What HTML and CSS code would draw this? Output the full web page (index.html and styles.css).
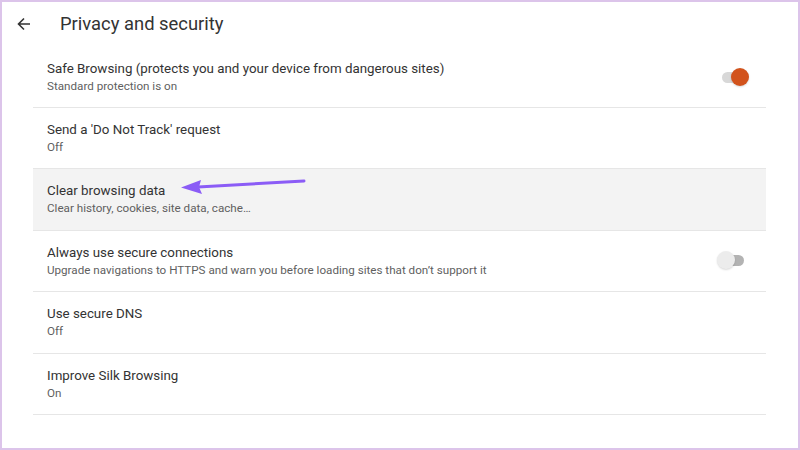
FILE: index.html
```html
<!DOCTYPE html>
<html lang="en">
<head>
    <meta charset="UTF-8">
    <meta name="viewport" content="width=device-width, initial-scale=1.0">
    <title>Privacy and security</title>
    <link rel="stylesheet" href="styles.css">
</head>
<body>

<div class="frame">

    <header class="topbar">
        <span class="back">
            <svg width="14" height="14" viewBox="0 0 14 14">
                <path d="M13 7H1.5M7 1.5L1.5 7L7 12.5" fill="none" stroke="#333" stroke-width="1.6"/>
            </svg>
        </span>
        <h1>Privacy and security</h1>
    </header>

    <section class="list">

        <div class="row">
            <div class="text">
                <p class="title">Safe Browsing (protects you and your device from dangerous sites)</p>
                <p class="sub">Standard protection is on</p>
            </div>
            <span class="toggle on"></span>
        </div>

        <div class="row">
            <div class="text">
                <p class="title">Send a 'Do Not Track' request</p>
                <p class="sub">Off</p>
            </div>
        </div>

        <div class="row hover">
            <div class="text">
                <p class="title">Clear browsing data</p>
                <p class="sub">Clear history, cookies, site data, cache…</p>
            </div>
            <svg class="pointer" width="130" height="16" viewBox="0 0 130 16">
                <path d="M124 3 L18 9" stroke="#8b5cf6" stroke-width="3" stroke-linecap="round"/>
                <path d="M1 9.5 L21 2 L19 9 L22 16 Z" fill="#8b5cf6"/>
            </svg>
        </div>

        <div class="row">
            <div class="text">
                <p class="title">Always use secure connections</p>
                <p class="sub">Upgrade navigations to HTTPS and warn you before loading sites that don’t support it</p>
            </div>
            <span class="toggle"></span>
        </div>

        <div class="row">
            <div class="text">
                <p class="title">Use secure DNS</p>
                <p class="sub">Off</p>
            </div>
        </div>

        <div class="row">
            <div class="text">
                <p class="title">Improve Silk Browsing</p>
                <p class="sub">On</p>
            </div>
        </div>

    </section>

</div>

</body>
</html>
```

FILE: styles.css
```css
html, body {
    margin: 0;
    padding: 0;
}

body {
    background-color: #fff;
    font-family: Roboto, "Noto Sans", sans-serif;
    color: #333;
}

.frame {
    width: 800px;
    height: 450px;
    box-sizing: border-box;
    border: 2px solid #dcc4ea;
    overflow: hidden;
}

.topbar {
    display: flex;
    align-items: center;
    height: 43px;
    padding-bottom: 2px;
}

.back {
    display: flex;
    width: 14px;
    margin-left: 15px;
    margin-right: 29px;
}

h1 {
    margin: 0;
    font-size: 18.4px;
    font-weight: 400;
    color: #333;
}

.list {
    margin-left: 31px;
    width: 733px;
}

.row {
    position: relative;
    display: flex;
    align-items: center;
    justify-content: space-between;
    height: 60px;
    padding: 0 14px;
    border-bottom: 1px solid #e6e6e6;
}

.row:nth-child(n+3) {
    height: 60.5px;
}

.row.hover {
    background-color: #f3f3f3;
}

.text p {
    margin: 0;
}

.title {
    font-size: 13.35px;
    line-height: 18px;
    color: #333;
}

.sub {
    font-size: 11.65px;
    line-height: 16px;
    color: #5f5f5f;
}

/* switches on the right side */
.toggle {
    position: relative;
    width: 22px;
    height: 11px;
    margin-right: 8px;
    border-radius: 6px;
    background-color: #b3b3b3;
}

.toggle::after {
    content: "";
    position: absolute;
    top: -4px;
    left: -5px;
    width: 18px;
    height: 18px;
    border-radius: 50%;
    background-color: #ececec;
    box-shadow: 0 1px 2px rgba(0, 0, 0, 0.15);
}

.toggle.on {
    background-color: #d8d8d8;
}

.toggle.on::after {
    left: 9px;
    background-color: #d2531c;
}

.pointer {
    position: absolute;
    left: 147px;
    top: 9px;
}
```
